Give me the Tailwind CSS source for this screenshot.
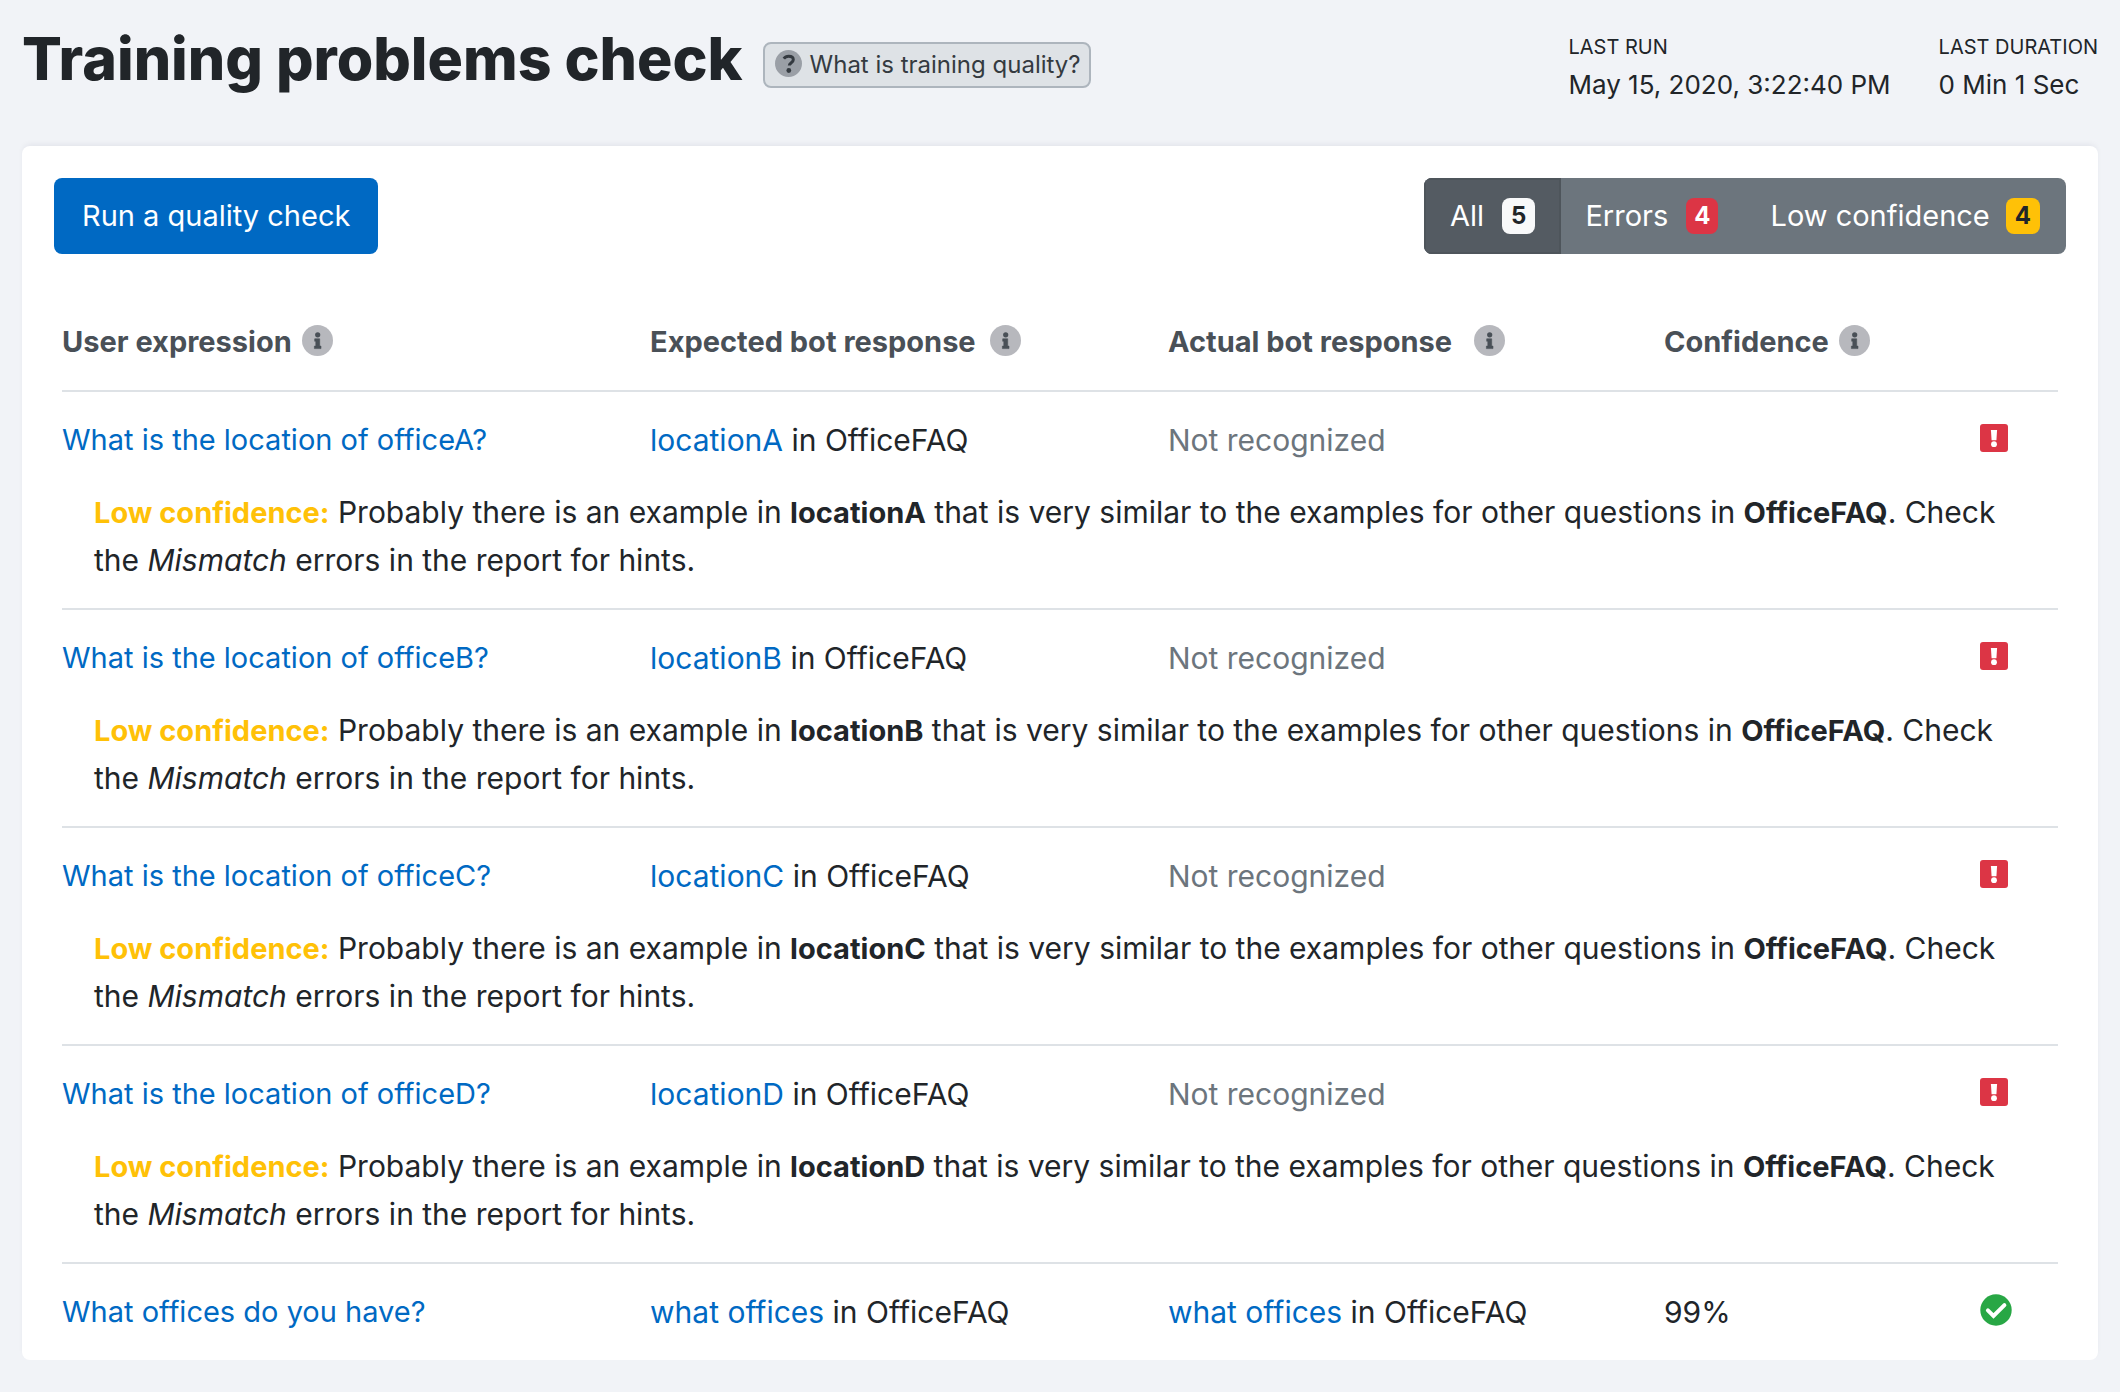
<!DOCTYPE html>
<html lang="en">
<head>
<meta charset="utf-8">
<meta name="viewport" content="width=device-width, initial-scale=1">
<title>Training problems check</title>
<script src="https://cdn.jsdelivr.net/npm/@tailwindcss/browser@4"></script>
</head>
<body class="min-h-screen bg-[#f1f3f7] px-[22px] pb-8 font-['Inter',sans-serif] text-[30px] leading-[48px] text-[#212529]">
<svg class="hidden" aria-hidden="true">
  <symbol id="info" viewBox="0 0 31 31">
    <circle cx="15.5" cy="15.5" r="15.5" fill="#b7b8bd"/>
    <circle cx="15.7" cy="9.8" r="2.6" fill="#495057"/>
    <path d="M12.7 13.8h5v7.3h1.3v2.5h-6.6v-2.5h1.4v-4.8h-1.1z" fill="#495057" stroke="#495057" stroke-width=".6" stroke-linejoin="round"/>
  </symbol>
  <symbol id="error" viewBox="0 0 28 28">
    <rect width="28" height="28" rx="3" fill="#dc3545"/>
    <path d="M10.9 6h6.2l-.7 10.2h-4.8z" fill="#fff"/>
    <circle cx="14" cy="20.2" r="2.9" fill="#fff"/>
  </symbol>
  <symbol id="ok" viewBox="0 0 32 32">
    <circle cx="16" cy="16" r="15.7" fill="#28a745"/>
    <path d="M7.9 16.4l5.6 5.5L24.4 11.1" fill="none" stroke="#fff" stroke-width="4" stroke-linecap="round"/>
  </symbol>
</svg>

<header class="flex items-start justify-between">
  <div class="flex items-start pt-5">
    <h1 class="text-[59px] leading-[78px] font-extrabold whitespace-nowrap">Training problems check</h1>
    <button type="button" class="mt-[22px] ml-5 flex h-[46px] items-center gap-2 rounded-lg border-2 border-[#adb5bd] bg-[#dee2e6] pr-2 pl-[10px] text-2xl whitespace-nowrap text-[#343a40]">
      <svg class="mb-1 size-[27px]" viewBox="0 0 27 27" aria-hidden="true">
        <circle cx="13.5" cy="13.5" r="13.5" fill="#9a9fa6"/>
        <path d="M8.8 8.6C10 7 11.6 6.3 13.7 6.3c2.5 0 4.6 1.2 4.6 3.4 0 3-4 2.9-4 5.8" fill="none" stroke="#343a40" stroke-width="3"/>
        <circle cx="13.8" cy="20.5" r="2.4" fill="#343a40"/>
      </svg>
      What is training quality?
    </button>
  </div>
  <dl class="flex gap-12 pt-7 pb-[42px] whitespace-nowrap">
    <div>
      <dt class="text-xl leading-[38px]">LAST RUN</dt>
      <dd class="text-[26px] leading-[38px]">May 15, 2020, 3:22:40 PM</dd>
    </div>
    <div>
      <dt class="text-xl leading-[38px]">LAST DURATION</dt>
      <dd class="text-[26px] leading-[38px]">0 Min 1 Sec</dd>
    </div>
  </dl>
</header>

<main class="rounded-lg bg-white shadow-[0_-3px_6px_-2px_rgba(30,30,60,0.08)]">
  <div class="flex items-center justify-between px-8 pt-8">
    <button type="button" class="h-[76px] rounded-lg bg-[#0069c3] px-7 text-[29px] text-white">Run a quality check</button>
    <div class="flex h-[76px] overflow-hidden rounded-lg bg-[#6c757d] text-[29px] text-white" role="group" aria-label="Filter results">
      <button type="button" aria-pressed="true" class="flex items-center gap-[18px] border-2 border-[#4e555b] bg-[#545b62] px-6">All <span class="rounded-lg bg-[#f8f9fa] px-[9px] text-2xl leading-9 font-bold text-[#212529]">5</span></button>
      <button type="button" aria-pressed="false" class="flex items-center gap-[18px] pr-[26px] pl-6">Errors <span class="rounded-lg bg-[#dc3545] px-2 text-2xl leading-9 font-bold">4</span></button>
      <button type="button" aria-pressed="false" class="flex items-center gap-4 px-[26px]">Low confidence <span class="rounded-lg bg-[#ffc107] px-[9px] text-2xl leading-9 font-bold text-[#212529]">4</span></button>
    </div>
  </div>

  <div class="px-10 pt-10">
    <table class="w-full table-fixed border-separate border-spacing-0 text-left [&_b]:text-[29px] [&_b]:leading-none [&_td]:p-0 [&_th]:px-0 [&_th]:py-6">
      <colgroup>
        <col class="w-[29.46%]"><col class="w-[25.95%]"><col class="w-[24.85%]"><col class="w-[15.83%]"><col>
      </colgroup>
      <thead class="text-[29px] text-[#495057]">
        <tr>
          <th scope="col"><div class="flex items-center gap-[10px]">User expression <svg class="mb-1 size-[31px]" aria-hidden="true"><use href="#info"/></svg></div></th>
          <th scope="col"><div class="flex items-center gap-[14px]">Expected bot response <svg class="mb-1 size-[31px]" aria-hidden="true"><use href="#info"/></svg></div></th>
          <th scope="col"><div class="flex items-center gap-[22px]">Actual bot response <svg class="mb-1 size-[31px]" aria-hidden="true"><use href="#info"/></svg></div></th>
          <th scope="col"><div class="flex items-center gap-[10px]">Confidence <svg class="mb-1 size-[31px]" aria-hidden="true"><use href="#info"/></svg></div></th>
          <td></td>
        </tr>
      </thead>
      <tbody class="[&>tr]:align-top">
        <tr class="[&>td]:border-t-2 [&>td]:border-[#dee2e6] [&>td]:py-6">
          <td class="text-[29px]"><a href="#" class="text-[#0069c3]">What is the location of officeA?</a></td>
          <td><a href="#" class="text-[#0069c3]">locationA</a> in OfficeFAQ</td>
          <td class="text-[#6c757d]">Not recognized</td>
          <td></td>
          <td><div class="flex h-12 items-center"><svg class="mb-1 size-7" role="img" aria-label="Error"><use href="#error"/></svg></div></td>
        </tr>
        <tr>
          <td colspan="5"><p class="pr-6 pb-6 pl-8"><b class="text-[#ffc107]">Low confidence:</b> Probably there is an example in <b>locationA</b> that is very similar to the examples for other questions in <b>OfficeFAQ</b>. Check the <i>Mismatch</i> errors in the report for hints.</p></td>
        </tr>
        <tr class="[&>td]:border-t-2 [&>td]:border-[#dee2e6] [&>td]:py-6">
          <td class="text-[29px]"><a href="#" class="text-[#0069c3]">What is the location of officeB?</a></td>
          <td><a href="#" class="text-[#0069c3]">locationB</a> in OfficeFAQ</td>
          <td class="text-[#6c757d]">Not recognized</td>
          <td></td>
          <td><div class="flex h-12 items-center"><svg class="mb-1 size-7" role="img" aria-label="Error"><use href="#error"/></svg></div></td>
        </tr>
        <tr>
          <td colspan="5"><p class="pr-6 pb-6 pl-8"><b class="text-[#ffc107]">Low confidence:</b> Probably there is an example in <b>locationB</b> that is very similar to the examples for other questions in <b>OfficeFAQ</b>. Check the <i>Mismatch</i> errors in the report for hints.</p></td>
        </tr>
        <tr class="[&>td]:border-t-2 [&>td]:border-[#dee2e6] [&>td]:py-6">
          <td class="text-[29px]"><a href="#" class="text-[#0069c3]">What is the location of officeC?</a></td>
          <td><a href="#" class="text-[#0069c3]">locationC</a> in OfficeFAQ</td>
          <td class="text-[#6c757d]">Not recognized</td>
          <td></td>
          <td><div class="flex h-12 items-center"><svg class="mb-1 size-7" role="img" aria-label="Error"><use href="#error"/></svg></div></td>
        </tr>
        <tr>
          <td colspan="5"><p class="pr-6 pb-6 pl-8"><b class="text-[#ffc107]">Low confidence:</b> Probably there is an example in <b>locationC</b> that is very similar to the examples for other questions in <b>OfficeFAQ</b>. Check the <i>Mismatch</i> errors in the report for hints.</p></td>
        </tr>
        <tr class="[&>td]:border-t-2 [&>td]:border-[#dee2e6] [&>td]:py-6">
          <td class="text-[29px]"><a href="#" class="text-[#0069c3]">What is the location of officeD?</a></td>
          <td><a href="#" class="text-[#0069c3]">locationD</a> in OfficeFAQ</td>
          <td class="text-[#6c757d]">Not recognized</td>
          <td></td>
          <td><div class="flex h-12 items-center"><svg class="mb-1 size-7" role="img" aria-label="Error"><use href="#error"/></svg></div></td>
        </tr>
        <tr>
          <td colspan="5"><p class="pr-6 pb-6 pl-8"><b class="text-[#ffc107]">Low confidence:</b> Probably there is an example in <b>locationD</b> that is very similar to the examples for other questions in <b>OfficeFAQ</b>. Check the <i>Mismatch</i> errors in the report for hints.</p></td>
        </tr>
        <tr class="[&>td]:border-t-2 [&>td]:border-[#dee2e6] [&>td]:py-6">
          <td class="text-[29px]"><a href="#" class="text-[#0069c3]">What offices do you have?</a></td>
          <td><a href="#" class="text-[#0069c3]">what offices</a> in OfficeFAQ</td>
          <td><a href="#" class="text-[#0069c3]">what offices</a> in OfficeFAQ</td>
          <td>99%</td>
          <td><div class="flex h-12 items-center"><svg class="mb-1 size-8" role="img" aria-label="Passed"><use href="#ok"/></svg></div></td>
        </tr>
      </tbody>
    </table>
  </div>
</main>
</body>
</html>
